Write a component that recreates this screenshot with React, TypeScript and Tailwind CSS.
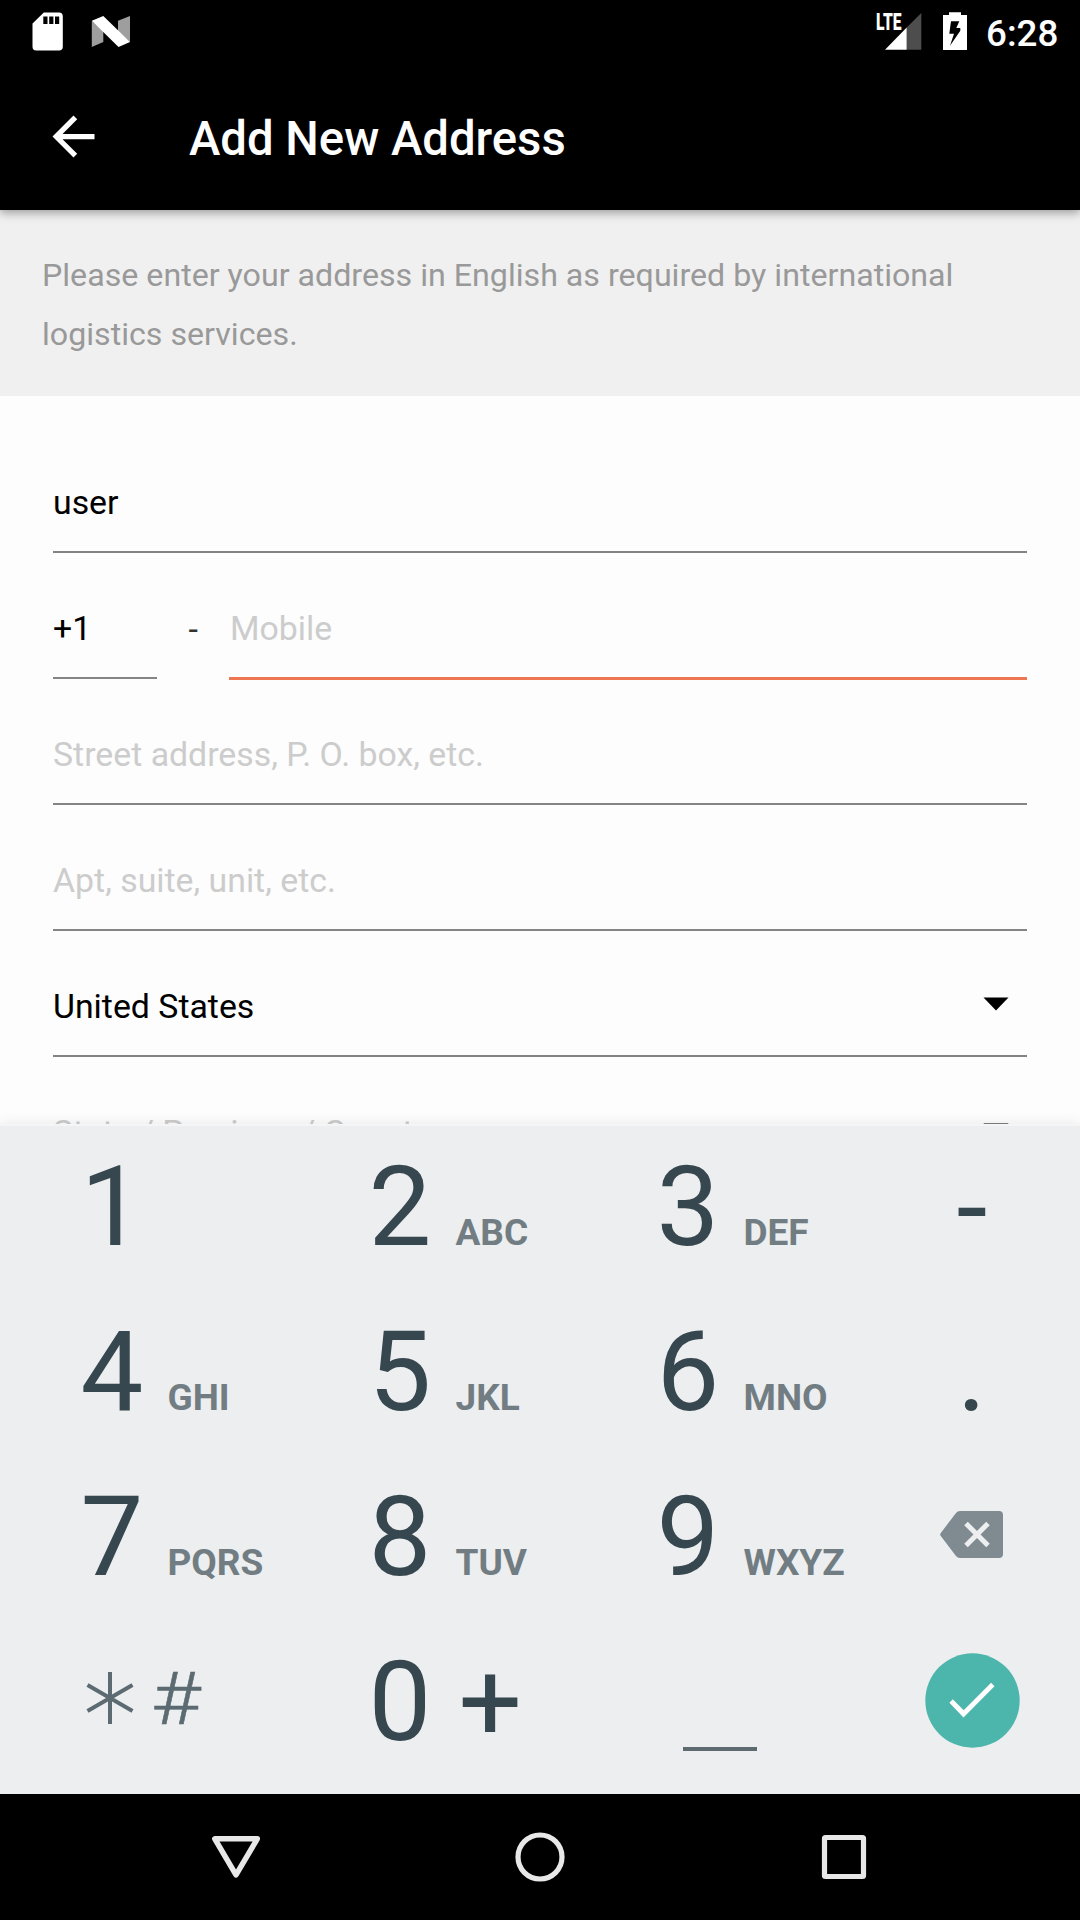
import type { ReactNode } from "react";

function StatusBar() {
  return (
    <div className="flex h-[63px] shrink-0 items-start">
      <svg className="h-[63px] w-[140px]" viewBox="0 0 140 63">
        <path
          fill="#fff"
          fillRule="evenodd"
          d="M43.8 12.5H59a3.8 3.8 0 0 1 3.8 3.8V46.700a3.800 3.800 0 0 1-3.800 3.800H36.300a3.800 3.800 0 0 1-3.800-3.800V23.500ZM43.300 16.500V24h4.200v-7.500ZM49.200 16.500V24h4.200v-7.500ZM55 16.500V24h4.200v-7.500Z"
        />
        <path fill="#9e9e9e" d="M91.800 20.700L103.300 31V42L91.800 47ZM118 20.700L130 16V42L118 32Z" />
        <path fill="#fff" d="M91.800 20.700L103.300 16L130 42L118.500 47Z" />
      </svg>
      <div className="flex-1" />
      <div className="relative h-[63px] w-[102px]">
        <svg className="h-[63px] w-[102px]" viewBox="870 0 102 63">
          <path fill="#4d4d4d" d="M906.700 27.500L921.300 13V49.700H906.700Z" />
          <path fill="#fff" d="M885 49.700L906.700 27.500V49.700Z" />
          <path
            fill="#fff"
            fillRule="evenodd"
            d="M943 15H949V12.300H961V15H967V50H943ZM951 21.300L949.300 33.700H954L950 45.700L960.300 30.700V28H956.300L959.300 21.300Z"
          />
        </svg>
        <span className="absolute top-[11px] left-[6px] origin-left scale-x-[0.68] text-[23px] leading-[23px] font-black">
          LTE
        </span>
      </div>
      <span className="w-[108px] pl-[14px] text-[36.750px] leading-[67px] font-medium">6:28</span>
    </div>
  );
}

function Toolbar() {
  return (
    <div className="flex h-[147px] shrink-0 items-start">
      <svg className="mt-[42px] ml-[42px] size-[63px]" viewBox="0 0 24 24" fill="#fff">
        <path d="M20 11H7.830l5.590-5.590L12 4l-8 8 8 8 1.410-1.410L7.830 13H20v-2z" />
      </svg>
      <h1 className="ml-[84px] text-[47.250px] leading-[152px] font-medium">Add New Address</h1>
    </div>
  );
}

function Field({
  children,
  className = "",
  line = "bg-[#848484] h-[2px]",
}: {
  children: ReactNode;
  className?: string;
  line?: string;
}) {
  return (
    <div className={`flex h-[126px] shrink-0 flex-col ${className}`}>
      <div className="flex h-[124px] shrink-0 items-end text-[33.850px] leading-[40px]">
        <div className="flex h-[68px] flex-1 items-start justify-between">{children}</div>
      </div>
      <div className={`shrink-0 ${line}`} />
    </div>
  );
}

function Caret() {
  return (
    <svg className="mt-[10px] mr-[18.500px] h-[14px] w-[26px]" viewBox="0 0 26 14">
      <path d="M.5 .5H25.500L13 13.500Z" />
    </svg>
  );
}

function Key({ digit, letters }: { digit: string; letters?: string }) {
  return (
    <div className="flex h-[165px] w-[288px] items-baseline text-[#37474f]">
      <span className="w-[87px] text-[111.800px] leading-[161px]">{digit}</span>
      <span className="text-[37px] font-bold text-[#717d82]">{letters}</span>
    </div>
  );
}

function Keypad() {
  return (
    <div className="relative z-10 grid h-[668px] shrink-0 grid-cols-[288px_288px_288px_1fr] grid-rows-[165px_165px_165px_165px] bg-[#eceeef] pl-[80.500px] shadow-[0_-2px_0_#f4f5f6,0_-3px_12px_rgba(0,0,0,0.08)]">
      <Key digit="1" />
      <Key digit="2" letters="ABC" />
      <Key digit="3" letters="DEF" />
      <span className="pl-[12px] text-[111.800px] leading-[164px] text-[#37474f]">-</span>
      <Key digit="4" letters="GHI" />
      <Key digit="5" letters="JKL" />
      <Key digit="6" letters="MNO" />
      <span className="pl-[12.500px] text-[111.800px] leading-[161px] text-[#37474f]">.</span>
      <Key digit="7" letters="PQRS" />
      <Key digit="8" letters="TUV" />
      <Key digit="9" letters="WXYZ" />
      <svg className="mt-[55px] ml-[-4.500px] h-[47px] w-[63px]" viewBox="0 0 63 47">
        <path
          fill="#7f8b90"
          d="M16 2Q17.500 0 20 0H59Q63 0 63 4V43Q63 47 59 47H20Q17.500 47 16 45L.6 24.800Q-.2 23.500.6 22.200Z"
        />
        <path stroke="#eceeef" strokeWidth="5" d="M26 12.500L48 34.500M48 12.500L26 34.500" />
      </svg>
      <div className="flex items-start">
        <svg className="mt-[51px] ml-[5.500px] h-[52px] w-[48px]" viewBox="0 0 48 52">
          <path
            fill="none"
            stroke="#5c6b72"
            strokeWidth="4"
            d="M24 0V52M1.500 13L46.500 39M46.500 13L1.500 39"
          />
        </svg>
        <span className="ml-[16.500px] origin-left scale-x-[1.17] pt-[35px] text-[73px] leading-[86px] font-light text-[#5c6b72] [-webkit-text-stroke:0.500px_#5c6b72]">
          #
        </span>
      </div>
      <div className="flex items-baseline text-[#37474f]">
        <span className="w-[90px] text-[111.800px] leading-[161px]">0</span>
        <span className="text-[112px] leading-[100px]">+</span>
      </div>
      <div className="mt-[125.500px] ml-[26px] h-[4px] w-[74px] bg-[#5f6a70]" />
      <svg className="mt-[31.500px] ml-[-20px] size-[95px]" viewBox="924.700 1652.500 95 95">
        <circle cx="972.200" cy="1700" r="47.200" fill="#4db6ac" />
        <path
          fill="#fff"
          d="M949.100 1702.300L952.500 1698.700L963.400 1709.700L990.800 1682.300L994.200 1685.700L963.200 1717Z"
        />
      </svg>
    </div>
  );
}

function NavBar() {
  return (
    <div className="flex h-[126px] shrink-0 items-center justify-center gap-[240px] bg-black">
      <svg className="size-[64px]" viewBox="204 1825 64 64" fill="none" stroke="#e8e8e8">
        <path strokeWidth="5.500" strokeLinejoin="round" d="M214.800 1838.800H257.300L236 1874.800Z" />
      </svg>
      <svg className="size-[64px]" viewBox="508 1825 64 64" fill="none" stroke="#e8e8e8">
        <circle cx="540" cy="1857" r="22" strokeWidth="5.200" />
      </svg>
      <svg className="size-[64px]" viewBox="812 1825 64 64" fill="none" stroke="#e8e8e8">
        <rect x="824.500" y="1837.500" width="39" height="39" rx="1" strokeWidth="5.200" strokeLinejoin="round" />
      </svg>
    </div>
  );
}

export default function App() {
  return (
    <div className="flex h-[1920px] w-[1080px] flex-col overflow-hidden bg-[#fdfdfd] font-[Roboto,sans-serif] text-black">
      <header className="relative z-10 flex shrink-0 flex-col bg-black text-white shadow-[0_3px_9px_rgba(0,0,0,0.35)]">
        <StatusBar />
        <Toolbar />
      </header>
      <p className="h-[185.500px] shrink-0 bg-[#f0f0f0] pt-[36px] pl-[42px] text-[32.180px] leading-[59px] text-[#999]">
        Please enter your address in English as required by international
        <br />
        logistics services.
      </p>
      <main className="flex h-[730.500px] shrink-0 flex-col overflow-hidden px-[53px] pt-[31.500px]">
        <Field>user</Field>
        <div className="flex">
          <Field className="w-[104.400px]">+1</Field>
          <span className="w-[72px] pt-[56px] pl-[31px] text-[34.125px] leading-[40px] text-[#333]">-</span>
          <Field className="flex-1" line="bg-[#ee7752] h-[3px]">
            <span className="pl-[0.600px] text-[#ccc]">Mobile</span>
          </Field>
        </div>
        <Field>
          <span className="text-[#ccc]">Street address, P. O. box, etc.</span>
        </Field>
        <Field>
          <span className="text-[#ccc]">Apt, suite, unit, etc.</span>
        </Field>
        <Field>
          <span>United States</span>
          <Caret />
        </Field>
        <Field>
          <span className="text-[#ccc]">State / Province / County</span>
          <Caret />
        </Field>
      </main>
      <Keypad />
      <NavBar />
    </div>
  );
}
